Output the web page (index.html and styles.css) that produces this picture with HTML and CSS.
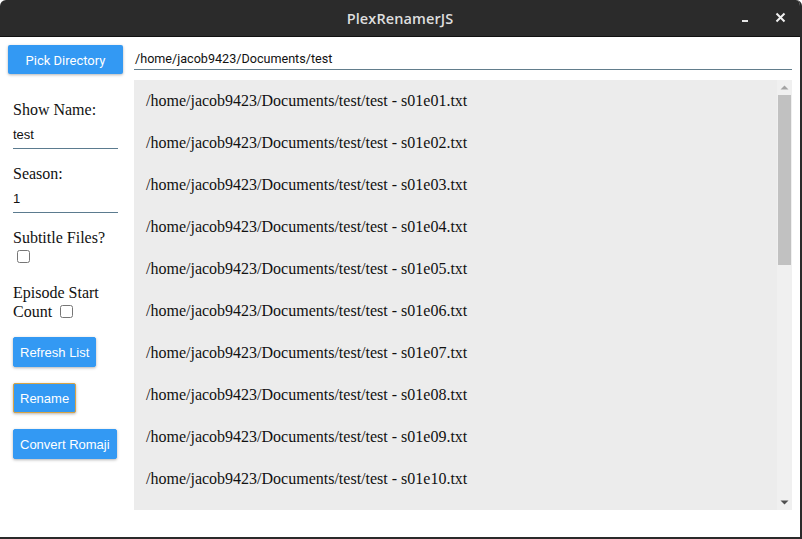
FILE: index.html
```html
<!DOCTYPE html>
<html>
<head>
<meta charset="utf-8">
<link rel="stylesheet" href="styles.css">
</head>
<body>
<div class="window">
  <div class="titlebar">
    <span class="title">PlexRenamerJS</span>
    <div class="controls">
      <svg class="ctl" width="14" height="14" viewBox="0 0 14 14"><rect x="3" y="9" width="6" height="2" fill="#e6e6e6"/></svg>
      <svg class="ctl" width="14" height="14" viewBox="0 0 14 14"><path d="M2.5 2.5 L10.5 10.5 M10.5 2.5 L2.5 10.5" stroke="#f0f0f0" stroke-width="2"/></svg>
    </div>
  </div>
  <div class="content">
    <div class="toprow">
      <button class="pick">Pick Directory</button>
      <div class="path">/home/jacob9423/Documents/test</div>
    </div>
    <div class="main">
      <div class="sidebar">
        <div class="label">Show Name:</div>
        <div class="field">test</div>
        <div class="label">Season:</div>
        <div class="field">1</div>
        <div class="label">Subtitle Files?</div>
        <div class="cbrow"><input type="checkbox" class="cb"></div>
        <div class="label two">Episode Start Count <input type="checkbox" class="cb inline"></div>
        <div class="btns">
          <button class="btn">Refresh List</button>
          <button class="btn focus">Rename</button>
          <button class="btn">Convert Romaji</button>
        </div>
      </div>
      <div class="list">
        <div class="items">
          <div class="item">/home/jacob9423/Documents/test/test - s01e01.txt</div>
          <div class="item">/home/jacob9423/Documents/test/test - s01e02.txt</div>
          <div class="item">/home/jacob9423/Documents/test/test - s01e03.txt</div>
          <div class="item">/home/jacob9423/Documents/test/test - s01e04.txt</div>
          <div class="item">/home/jacob9423/Documents/test/test - s01e05.txt</div>
          <div class="item">/home/jacob9423/Documents/test/test - s01e06.txt</div>
          <div class="item">/home/jacob9423/Documents/test/test - s01e07.txt</div>
          <div class="item">/home/jacob9423/Documents/test/test - s01e08.txt</div>
          <div class="item">/home/jacob9423/Documents/test/test - s01e09.txt</div>
          <div class="item">/home/jacob9423/Documents/test/test - s01e10.txt</div>
        </div>
        <div class="scrollbar">
          <div class="arrow"><svg width="15" height="15" viewBox="0 0 15 15"><path d="M3.5 9.5 L7.5 5.5 L11.5 9.5 Z" fill="#a3a3a3"/></svg></div>
          <div class="track"><div class="thumb"></div></div>
          <div class="arrow"><svg width="15" height="15" viewBox="0 0 15 15"><path d="M3.5 5.5 L11.5 5.5 L7.5 9.5 Z" fill="#505050"/></svg></div>
        </div>
      </div>
    </div>
  </div>
</div>
</body>
</html>
```

FILE: styles.css
```css
html, body {
  margin: 0;
  padding: 0;
  background: #ffffff;
}
.window {
  width: 800px;
  height: 537px;
  border-right: 2px solid #2a2a2a;
  border-bottom: 2px solid #2a2a2a;
  border-radius: 6px 6px 0 0;
  overflow: hidden;
  display: flex;
  flex-direction: column;
  background: #ffffff;
}
.titlebar {
  height: 36px;
  flex: none;
  background: #2b2b2b;
  border-bottom: 1px solid #111111;
  display: flex;
  align-items: center;
  justify-content: center;
  position: relative;
}
.title {
  font-family: "Open Sans", "DejaVu Sans", sans-serif;
  font-weight: 600;
  font-size: 14.5px;
  color: #dedede;
  letter-spacing: 0.1px;
}
.controls {
  position: absolute;
  right: 12px;
  top: 11px;
  display: flex;
  gap: 21px;
}
.ctl {
  display: block;
}
.content {
  flex: 1;
  padding: 8px 8px 0 8px;
  display: flex;
  flex-direction: column;
  gap: 6px;
}
.toprow {
  display: flex;
  align-items: flex-start;
  gap: 11px;
}
.pick {
  width: 115px;
  height: 29px;
  border: none;
  border-radius: 2px;
  background: #3399f3;
  color: #ffffff;
  font-family: Roboto, "Liberation Sans", sans-serif;
  font-size: 13px;
  box-shadow: 0 1px 3px rgba(0,0,0,0.3);
  padding: 2px 0 0 0;
}
.path {
  flex: 1;
  height: 24px;
  line-height: 27px;
  border-bottom: 1px solid #627d8c;
  font-family: Roboto, "Liberation Sans", sans-serif;
  font-size: 12.6px;
  color: #111111;
  padding-left: 1px;
}
.main {
  display: flex;
}
.sidebar {
  width: 121px;
  flex: none;
  padding: 21px 0 0 5px;
  display: flex;
  flex-direction: column;
}
.label {
  font-family: "Liberation Serif", serif;
  font-size: 16px;
  line-height: 18px;
  color: #111111;
}
.label.two {
  line-height: 19px;
  margin-top: 17px;
  padding-right: 10px;
}
.field {
  width: 105px;
  height: 24px;
  line-height: 21px;
  margin-top: 5px;
  margin-bottom: 16px;
  border-bottom: 1px solid #5b7b8f;
  font-family: "Liberation Sans", Arial, sans-serif;
  font-size: 13px;
  color: #111111;
}
.cbrow {
  line-height: 0;
}
.cb {
  width: 13px;
  height: 13px;
  margin: 3px 3px 3px 4px;
}
.inline {
  vertical-align: -1px;
  margin: 0 0 0 4px;
}
.btns {
  display: flex;
  flex-direction: column;
  align-items: flex-start;
  gap: 16px;
  margin-top: 16px;
}
.btn {
  height: 30px;
  border: 1px solid #3399f3;
  border-radius: 2px;
  background: #3399f3;
  color: #ffffff;
  font-family: "Liberation Sans", Arial, sans-serif;
  font-size: 13px;
  padding: 0 6px;
  box-shadow: 0 1px 3px rgba(0,0,0,0.3);
}
.btn.focus {
  border-color: #d9a444;
}
.list {
  flex: 1;
  height: 430px;
  background: #ececec;
  display: flex;
  overflow: hidden;
}
.items {
  flex: 1;
  overflow: hidden;
}
.item {
  height: 42px;
  line-height: 42px;
  padding-left: 12px;
  font-family: "Liberation Serif", serif;
  font-size: 16px;
  color: #111111;
  white-space: nowrap;
}
.scrollbar {
  width: 15px;
  flex: none;
  background: #f0f0f0;
  display: flex;
  flex-direction: column;
}
.arrow {
  height: 15px;
  flex: none;
}
.arrow svg {
  display: block;
}
.track {
  flex: 1;
  padding: 0 1px;
}
.thumb {
  height: 170px;
  background: #c1c1c1;
}
```
